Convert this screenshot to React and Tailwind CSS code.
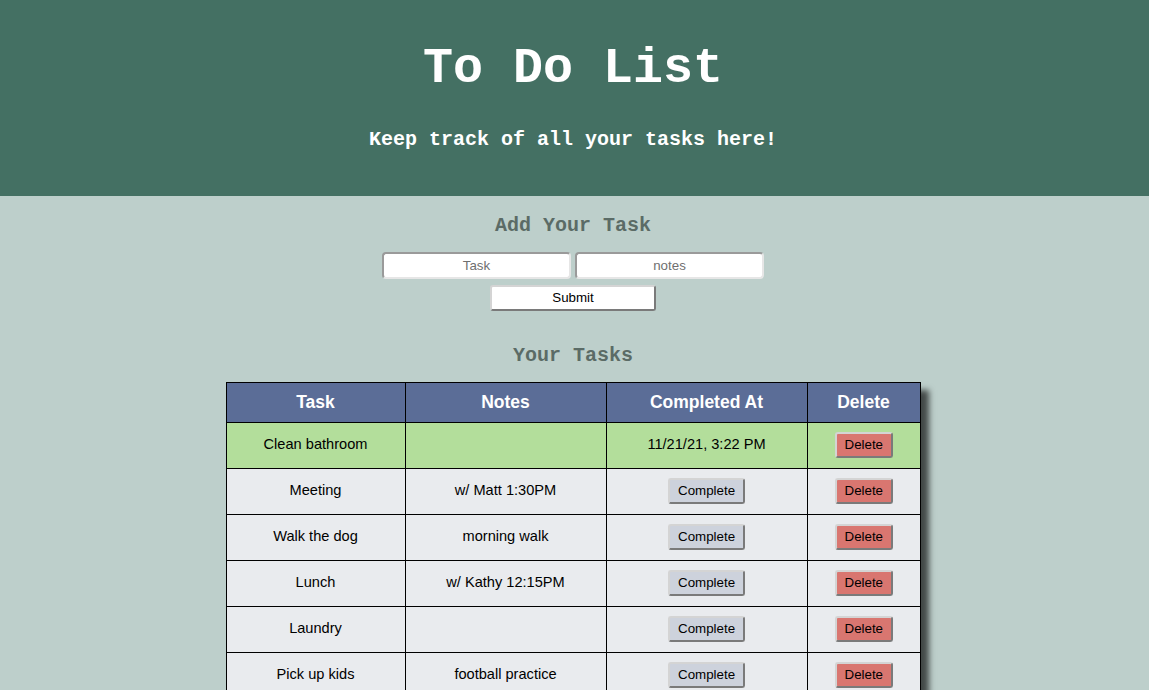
const tasks = [
  { name: 'Clean bathroom', notes: '', done: '11/21/21, 3:22 PM' },
  { name: 'Meeting', notes: 'w/ Matt 1:30PM' },
  { name: 'Walk the dog', notes: 'morning walk' },
  { name: 'Lunch', notes: 'w/ Kathy 12:15PM' },
  { name: 'Laundry', notes: '' },
  { name: 'Pick up kids', notes: 'football practice' },
];

const mono = { fontFamily: '"Liberation Mono", "Courier New", monospace' };

function Btn({ children, className }) {
  return (
    <button
      className={`h-[26px] px-2 rounded-[3px] border-2 border-t-[#d4d4d4] border-l-[#d4d4d4] border-b-[#7a7a7a] border-r-[#7a7a7a] text-[13.33px] text-black leading-none ${className}`}
    >
      {children}
    </button>
  );
}

export default function App() {
  return (
    <div className="min-h-[690px] bg-[#bdcfcb] font-['Liberation_Sans',Arial,sans-serif]">
      <header className="bg-[#447063] text-white text-center pt-[40px] pr-[3px] h-[196px]" style={mono}>
        <h1 className="text-[50px] leading-[58px] font-bold">To Do List</h1>
        <p className="text-[20px] leading-[24px] font-bold mt-[30px]">Keep track of all your tasks here!</p>
      </header>

      <section className="flex flex-col items-center pr-[3px]">
        <h2 className="mt-[18px] text-[20px] leading-[24px] font-bold text-[#5b6b66]" style={mono}>
          Add Your Task
        </h2>
        <div className="flex gap-1 mt-[14px]">
          <input
            placeholder="Task"
            className="w-[189px] h-[27px] bg-white rounded-[4px] border-2 border-t-[#9a9a9a] border-l-[#9a9a9a] border-b-[#e6e6e6] border-r-[#e6e6e6] text-center text-[13.33px] placeholder:text-[#6f6f6f] outline-none"
          />
          <input
            placeholder="notes"
            className="w-[189px] h-[27px] bg-white rounded-[4px] border-2 border-t-[#9a9a9a] border-l-[#9a9a9a] border-b-[#e6e6e6] border-r-[#e6e6e6] text-center text-[13.33px] placeholder:text-[#6f6f6f] outline-none"
          />
        </div>
        <Btn className="mt-[6px] w-[166px] bg-white">Submit</Btn>

        <h2 className="mt-[33px] text-[20px] leading-[24px] font-bold text-[#5b6b66]" style={mono}>
          Your Tasks
        </h2>

        <table className="mt-[14px] border-collapse border border-black shadow-[8px_8px_6px_rgba(0,0,0,0.65)] text-[14.6px] text-black">
          <thead>
            <tr className="bg-[#5b6d97] text-white text-[17.5px] font-bold h-[40px]">
              <th className="w-[179px] border border-black">Task</th>
              <th className="w-[201px] border border-black">Notes</th>
              <th className="w-[201px] border border-black">Completed At</th>
              <th className="w-[113px] border border-black">Delete</th>
            </tr>
          </thead>
          <tbody>
            {tasks.map((t) => (
              <tr key={t.name} className={`h-[46px] text-center ${t.done ? 'bg-[#b3de9b]' : 'bg-[#e9ebee]'}`}>
                <td className="border border-black pb-[2px]">{t.name}</td>
                <td className="border border-black pb-[2px]">{t.notes}</td>
                <td className="border border-black pb-[2px]">
                  {t.done ? t.done : <Btn className="w-[77px] bg-[#cdd2dc]">Complete</Btn>}
                </td>
                <td className="border border-black pb-[2px]">
                  <Btn className="w-[58px] bg-[#d97670]">Delete</Btn>
                </td>
              </tr>
            ))}
          </tbody>
        </table>
      </section>
    </div>
  );
}
